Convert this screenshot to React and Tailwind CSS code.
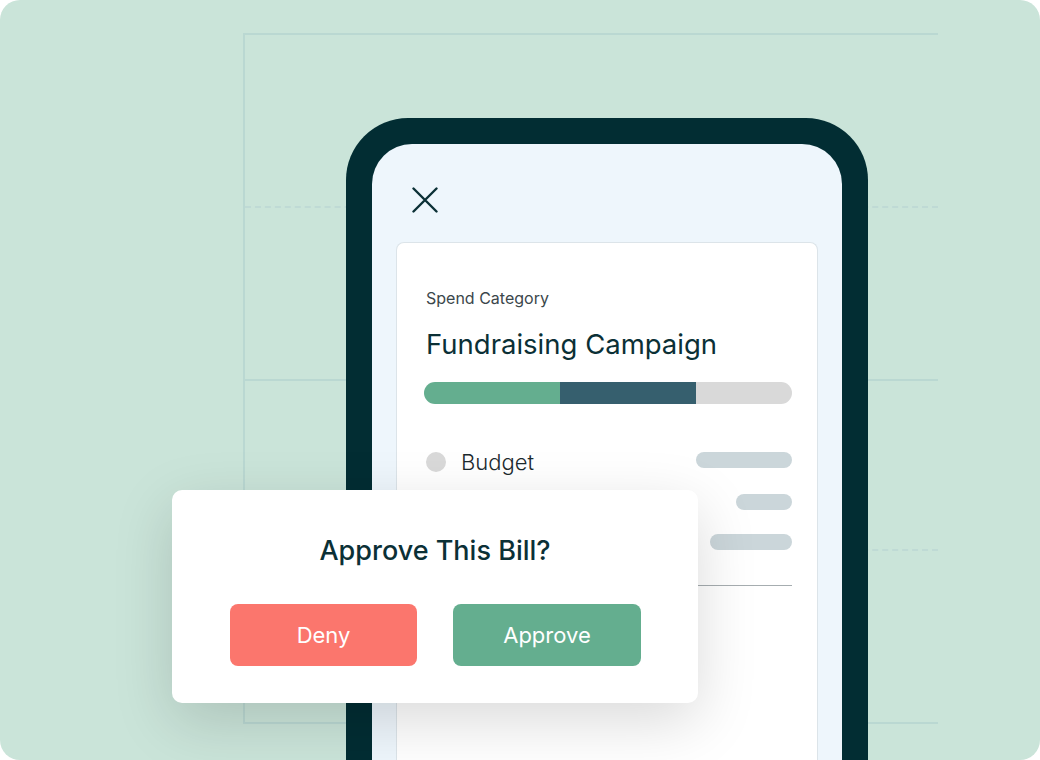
export default function App() {
  return (
    <div className="w-[1040px] h-[760px] bg-white" style={{ fontFamily: "Inter, 'Noto Sans', sans-serif" }}>
      <div className="relative w-full h-full rounded-[20px] bg-[#cae4d9] overflow-hidden">
        {/* decorative grid lines */}
        <div className="absolute left-[243px] top-[33px] w-[2px] h-[691px] bg-[#bad8d2]" />
        <div className="absolute left-[243px] top-[33px] w-[695px] h-[2px] bg-[#bad8d2]" />
        <div className="absolute left-[243px] top-[379px] w-[695px] h-[2px] bg-[#bad8d2]" />
        <div className="absolute left-[243px] top-[722px] w-[695px] h-[2px] bg-[#bad8d2]" />
        <div className="absolute left-[245px] top-[206px] w-[693px] border-t-[2px] border-dashed border-[#bfdad5]" />
        <div className="absolute left-[245px] top-[549px] w-[693px] border-t-[2px] border-dashed border-[#bfdad5]" />

        {/* phone */}
        <div className="relative pt-[118px] pl-[346px]">
          <div className="w-[522px] h-[642px] bg-[#022d33] rounded-t-[62px] pt-[26px] px-[26px]">
            <div className="h-full bg-[#eef6fc] rounded-t-[40px] pt-[43px] px-[24px] flex flex-col">
              <svg className="ml-[16px]" width="26" height="26" viewBox="0 0 26 26" fill="none">
                <path d="M1.5 1.5L24.5 24.5M24.5 1.5L1.5 24.5" stroke="#0b3036" strokeWidth="2.4" strokeLinecap="round" />
              </svg>
              <div className="mt-[29px] flex-1 bg-white border border-[#dce4e9] border-b-0 rounded-t-[8px] pl-[27px] pr-[25px] pt-[45px]">
                <div className="text-[16px] leading-[20px] text-[#3b474b] pl-[2px]">Spend Category</div>
                <div className="mt-[20px] text-[27.5px] leading-[32px] text-[#0b3036] pl-[2px]">Fundraising Campaign</div>
                <div className="mt-[22px] h-[22px] w-full rounded-full overflow-hidden flex">
                  <div className="w-[136px] bg-[#64ae8f]" />
                  <div className="w-[136px] bg-[#365f6e]" />
                  <div className="flex-1 bg-[#d9d9d9]" />
                </div>
                <div className="mt-[48px] flex flex-col items-end">
                  <div className="w-full h-[20px] flex items-center">
                    <div className="ml-[2px] w-[20px] h-[20px] rounded-full bg-[#d9d9d9]" />
                    <div className="ml-[15px] text-[22px] leading-[20px] font-light text-[#1c2a2e]">Budget</div>
                    <div className="ml-auto self-start w-[96px] h-[16px] rounded-full bg-[#cbd6da]" />
                  </div>
                  <div className="mt-[22px] w-[56px] h-[16px] rounded-full bg-[#cbd6da]" />
                  <div className="mt-[24px] w-[82px] h-[16px] rounded-full bg-[#cbd6da]" />
                  <div className="mt-[35px] w-full h-px bg-[#a6adb0]" />
                </div>
              </div>
            </div>
          </div>
        </div>

        {/* popup */}
        <div className="absolute left-[172px] top-[490px] w-[526px] h-[213px] bg-white rounded-[10px] shadow-[0_18px_60px_rgba(0,0,0,0.15)] pt-[45px]">
          <div className="text-center text-[27px] leading-[32px] font-medium text-[#0b3036]">Approve This Bill?</div>
          <div className="mt-[37px] pl-[58px] flex gap-[36px]">
            <div className="w-[187px] h-[62px] rounded-[8px] bg-[#fb766d] flex items-center justify-center text-white text-[22px] pt-[1px]">Deny</div>
            <div className="w-[188px] h-[62px] rounded-[8px] bg-[#64ae8f] flex items-center justify-center text-white text-[22px] pt-[1px]">Approve</div>
          </div>
        </div>
      </div>
    </div>
  );
}
